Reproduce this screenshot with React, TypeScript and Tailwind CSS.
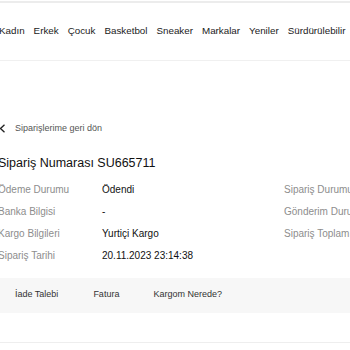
import React from 'react';

const navItems = ['Kadın', 'Erkek', 'Çocuk', 'Basketbol', 'Sneaker', 'Markalar', 'Yeniler', 'Sürdürülebilir'];

const leftRows = [
  { label: 'Ödeme Durumu', value: 'Ödendi' },
  { label: 'Banka Bilgisi', value: '-' },
  { label: 'Kargo Bilgileri', value: 'Yurtiçi Kargo' },
  { label: 'Sipariş Tarihi', value: '20.11.2023 23:14:38' },
];

const rightRows = ['Sipariş Durumu', 'Gönderim Durumu', 'Sipariş Toplamı'];

const App = () => {
  return (
    <div className="w-[350px] h-[350px] overflow-hidden bg-white font-['Liberation_Sans',Arial,sans-serif] text-[#111]">
      {/* Top nav */}
      <div className="mt-[1px] border-t-2 border-[#ececec] h-[60px] border-b border-b-[#f0f0f0] flex items-center">
        <nav className="-ml-[1px] flex gap-[9px] whitespace-nowrap text-[9.8px] text-[#222]">
          {navItems.map((item) => (
            <span key={item}>{item}</span>
          ))}
        </nav>
      </div>

      <div className="-ml-[2px] w-[400px]">
        {/* Back link */}
        <div className="mt-[61px] flex items-center gap-[9px] text-[9px] text-[#555]">
          <svg width="7" height="9" viewBox="0 0 7 9" className="ml-[1px]">
            <path d="M5.5 0.8 L1.5 4.5 L5.5 8.2" stroke="#222" strokeWidth="1.3" fill="none" />
          </svg>
          <span>Siparişlerime geri dön</span>
        </div>

        {/* Title */}
        <h1 className="mt-[19px] text-[12.5px] leading-[16px] text-[#111]">Sipariş Numarası SU665711</h1>

        {/* Details */}
        <div className="mt-[8px] flex">
          <div className="w-[286px] flex flex-col">
            {leftRows.map((row) => (
              <div key={row.label} className="flex h-[22px] items-center text-[10px]">
                <span className="w-[104px] text-[#8d8d8d]">{row.label}</span>
                <span className="text-[#111]">{row.value}</span>
              </div>
            ))}
          </div>
          <div className="flex flex-col">
            {rightRows.map((label) => (
              <div key={label} className="flex h-[22px] items-center text-[10px] text-[#8d8d8d] whitespace-nowrap">
                {label}
              </div>
            ))}
          </div>
        </div>
      </div>

      {/* Actions */}
      <div className="mt-[11px] h-[35px] bg-[#f7f7f7] flex items-center text-[9px] text-[#333]">
        <span className="ml-[15px]">İade Talebi</span>
        <span className="ml-[35px]">Fatura</span>
        <span className="ml-[34px]">Kargom Nerede?</span>
      </div>

      <div className="mt-[29px] border-t border-[#eeeeee]" />
    </div>
  );
};

export default App;
